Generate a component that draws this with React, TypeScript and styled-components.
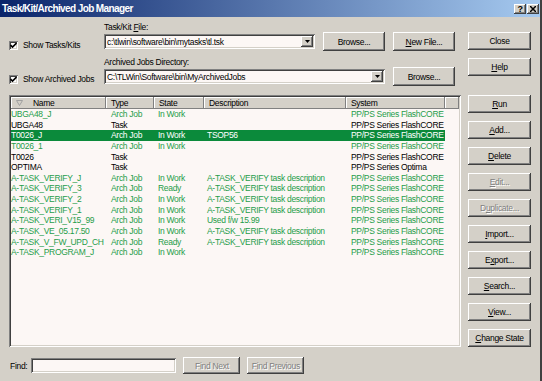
import React from "react";
import styled, { createGlobalStyle, css } from "styled-components";

const GlobalStyle = createGlobalStyle`
  html, body {
    margin: 0;
    padding: 0;
    background: #d4d0c8;
  }
  body {
    font-family: "Liberation Sans", Arial, sans-serif;
  }
`;

const raised = css`
  background: #d4d0c8;
  box-shadow: inset -1px -1px #404040, inset 1px 1px #ffffff,
    inset -2px -2px #808080, inset 2px 2px #d4d0c8;
`;

const sunken = css`
  box-shadow: inset 1px 1px #808080, inset -1px -1px #ffffff,
    inset 2px 2px #404040, inset -2px -2px #d4d0c8;
`;

const FIELD_BG = "#fcf7f5";
const GREEN = "#1f9d4a";
const SELECTED = "#0b8a3b";

const Window = styled.div`
  width: 542px;
  height: 381px;
  box-sizing: border-box;
  background: #d4d0c8;
  border-right: 2px solid #404040;
  font-size: 8.5px;
  letter-spacing: -0.3px;
  color: #000;
  display: flex;
  flex-direction: column;
  overflow: hidden;
`;

const TitleBar = styled.div`
  height: 17px;
  flex: none;
  display: flex;
  align-items: center;
  justify-content: space-between;
  padding: 0 1px 0 2px;
  background: linear-gradient(to right, #0a246a, #a6caf0);
`;

const TitleText = styled.span`
  color: #fff;
  font-weight: bold;
  font-size: 10px;
  letter-spacing: -0.6px;
`;

const TitleButtons = styled.div`
  display: flex;
  gap: 1px;
`;

const TitleButton = styled.div`
  ${raised};
  width: 12px;
  height: 10px;
  display: flex;
  align-items: center;
  justify-content: center;
  font-weight: bold;
  font-size: 9px;
  line-height: 10px;
`;

const Body = styled.div`
  flex: 1;
  display: flex;
  gap: 7px;
  padding: 1px 0 0 9px;
`;

const LeftCol = styled.div`
  width: 452px;
  display: flex;
  flex-direction: column;
`;

const TopGrid = styled.div`
  margin-top: 4px;
  display: grid;
  grid-template-columns: 87px 211px 62px 62px;
  grid-template-rows: 10px 19px 16px 19px;
  column-gap: 8px;
`;

const FieldLabel = styled.div<{ $row: number }>`
  grid-column: 2 / 4;
  grid-row: ${(p) => p.$row};
  align-self: end;
  line-height: 10px;
`;

const CheckRow = styled.label<{ $row: number; $drop: number }>`
  grid-column: 1;
  grid-row: ${(p) => p.$row};
  align-self: end;
  margin-bottom: ${(p) => p.$drop}px;
  display: flex;
  align-items: center;
  gap: 5px;
  white-space: nowrap;
`;

const CheckBox = styled.span`
  ${sunken};
  width: 9px;
  height: 9px;
  background: #fff;
  display: flex;
  align-items: center;
  justify-content: center;
  flex: none;
`;

const Combo = styled.div<{ $span: number; $row: number }>`
  ${sunken};
  grid-column: 2 / span ${(p) => p.$span};
  grid-row: ${(p) => p.$row};
  align-self: center;
  height: 15px;
  background: ${FIELD_BG};
  display: flex;
  align-items: center;
  justify-content: space-between;
  padding: 0 2px 0 3px;
  box-sizing: border-box;
`;

const ComboText = styled.span`
  white-space: nowrap;
`;

const ComboArrow = styled.div`
  ${raised};
  width: 12px;
  height: 11px;
  display: flex;
  align-items: center;
  justify-content: center;
`;

const Button = styled.div<{ $gap?: number; $disabled?: boolean }>`
  ${raised};
  height: 18px;
  margin-top: ${(p) => p.$gap ?? 0}px;
  display: flex;
  align-items: center;
  justify-content: center;
  white-space: nowrap;
  color: ${(p) => (p.$disabled ? "#808080" : "#000")};
  text-shadow: ${(p) => (p.$disabled ? "1px 1px #ffffff" : "none")};
  flex: none;
`;

const GridButton = styled(Button)<{ $col: number; $row: number }>`
  grid-column: ${(p) => p.$col};
  grid-row: ${(p) => p.$row};
  align-self: center;
  height: 19px;
`;

const List = styled.div`
  ${sunken};
  margin-top: 9px;
  height: 252px;
  box-sizing: border-box;
  padding: 2px;
  background: ${FIELD_BG};
  overflow: hidden;
`;

const Header = styled.div`
  display: flex;
  height: 12px;
`;

const HeaderCell = styled.div<{ $w: number; $grow?: boolean }>`
  width: ${(p) => p.$w}px;
  flex: ${(p) => (p.$grow ? 1 : "none")};
  box-sizing: border-box;
  background: #d4d0c8;
  box-shadow: inset -1px -1px #808080, inset 1px 1px #ffffff;
  padding-left: 5px;
  line-height: 12px;
  display: flex;
  align-items: center;
  gap: 10px;
  white-space: nowrap;
`;

const Row = styled.div<{ $tone: Tone }>`
  display: flex;
  height: 10.65px;
  line-height: 10.65px;
  width: ${95 + 48 + 50 + 142 + 99}px;
  background: ${(p) => (p.$tone === "selected" ? SELECTED : "transparent")};
  color: ${(p) =>
    p.$tone === "selected" ? "#ffffff" : p.$tone === "green" ? GREEN : "#000"};
`;

const Cell = styled.div<{ $w: number; $pad: number }>`
  width: ${(p) => p.$w}px;
  padding-left: ${(p) => p.$pad}px;
  box-sizing: border-box;
  white-space: nowrap;
  overflow: hidden;
`;

const FindRow = styled.div`
  margin-top: 10px;
  display: flex;
  align-items: center;
  padding-left: 1px;
`;

const FindInput = styled.div`
  ${sunken};
  width: 145px;
  height: 15px;
  margin-left: 4px;
  background: ${FIELD_BG};
`;

const FindButton = styled(Button)`
  width: 57px;
  height: 17px;
  margin-left: 7px;
`;

const RightCol = styled.div`
  width: 63px;
  display: flex;
  flex-direction: column;
`;

type Tone = "green" | "black" | "selected";

const columns = [
  { w: 95, pad: 0 },
  { w: 48, pad: 5 },
  { w: 50, pad: 4 },
  { w: 142, pad: 3 },
  { w: 99, pad: 5 },
];

const FC = "PP/PS Series FlashCORE";
const DESC = "A-TASK_VERIFY task description";

const jobs: { cells: string[]; tone: Tone }[] = [
  { cells: ["UBGA48_J", "Arch Job", "In Work", "", FC], tone: "green" },
  { cells: ["UBGA48", "Task", "", "", FC], tone: "black" },
  { cells: ["T0026_J", "Arch Job", "In Work", "TSOP56", FC], tone: "selected" },
  { cells: ["T0026_1", "Arch Job", "In Work", "", FC], tone: "green" },
  { cells: ["T0026", "Task", "", "", FC], tone: "black" },
  { cells: ["OPTIMA", "Task", "", "", "PP/PS Series Optima"], tone: "black" },
  { cells: ["A-TASK_VERIFY_J", "Arch Job", "In Work", DESC, FC], tone: "green" },
  { cells: ["A-TASK_VERIFY_3", "Arch Job", "Ready", DESC, FC], tone: "green" },
  { cells: ["A-TASK_VERIFY_2", "Arch Job", "In Work", DESC, FC], tone: "green" },
  { cells: ["A-TASK_VERIFY_1", "Arch Job", "In Work", DESC, FC], tone: "green" },
  { cells: ["A-TASK_VERI_V15_99", "Arch Job", "In Work", "Used f/w 15.99", FC], tone: "green" },
  { cells: ["A-TASK_VE_05.17.50", "Arch Job", "In Work", DESC, FC], tone: "green" },
  { cells: ["A-TASK_V_FW_UPD_CH", "Arch Job", "Ready", DESC, FC], tone: "green" },
  { cells: ["A-TASK_PROGRAM_J", "Arch Job", "In Work", "", FC], tone: "green" },
];

const Check = () => (
  <svg width="7" height="7" viewBox="0 0 7 7">
    <path d="M0.5 3 L2.5 5 L6.5 1" stroke="#000" strokeWidth="1.6" fill="none" />
  </svg>
);

const DownArrow = () => (
  <svg width="5" height="3" viewBox="0 0 5 3">
    <path d="M0 0 H5 L2.5 3 Z" fill="#000" />
  </svg>
);

const SortMark = () => (
  <svg width="7" height="6" viewBox="0 0 7 6">
    <path d="M0.5 0.5 H6.5 L3.5 5.5 Z" stroke="#a0a0a0" fill="none" strokeWidth="1" />
  </svg>
);

const CloseGlyph = () => (
  <svg width="6" height="6" viewBox="0 0 6 6">
    <path d="M0 0 L6 6 M6 0 L0 6" stroke="#000" strokeWidth="1.5" />
  </svg>
);

const App = () => {
  return (
    <>
      <GlobalStyle />
      <Window>
        <TitleBar>
          <TitleText>Task/Kit/Archived Job Manager</TitleText>
          <TitleButtons>
            <TitleButton>?</TitleButton>
            <TitleButton>
              <CloseGlyph />
            </TitleButton>
          </TitleButtons>
        </TitleBar>

        <Body>
          <LeftCol>
            <TopGrid>
              <FieldLabel $row={1}>
                Task/Kit <u>F</u>ile:
              </FieldLabel>
              <CheckRow $row={2} $drop={1}>
                <CheckBox>
                  <Check />
                </CheckBox>
                Show Tasks/Kits
              </CheckRow>
              <Combo $span={1} $row={2}>
                <ComboText>c:\tlwin\software\bin\mytasks\tl.tsk</ComboText>
                <ComboArrow>
                  <DownArrow />
                </ComboArrow>
              </Combo>
              <GridButton $col={3} $row={2}>
                Browse...
              </GridButton>
              <GridButton $col={4} $row={2}>
                <u>N</u>ew File...
              </GridButton>

              <FieldLabel $row={3}>Archived Jobs Directory:</FieldLabel>
              <CheckRow $row={4} $drop={2}>
                <CheckBox>
                  <Check />
                </CheckBox>
                Show Archived Jobs
              </CheckRow>
              <Combo $span={2} $row={4}>
                <ComboText>C:\TLWin\Software\bin\MyArchivedJobs</ComboText>
                <ComboArrow>
                  <DownArrow />
                </ComboArrow>
              </Combo>
              <GridButton $col={4} $row={4}>
                Browse...
              </GridButton>
            </TopGrid>

            <List>
              <Header>
                <HeaderCell $w={95}>
                  <SortMark />
                  Name
                </HeaderCell>
                <HeaderCell $w={48}>Type</HeaderCell>
                <HeaderCell $w={50}>State</HeaderCell>
                <HeaderCell $w={142}>Description</HeaderCell>
                <HeaderCell $w={99}>System</HeaderCell>
                <HeaderCell $w={0} $grow />
              </Header>
              {jobs.map((job) => (
                <Row key={job.cells[0]} $tone={job.tone}>
                  {job.cells.map((text, i) => (
                    <Cell key={i} $w={columns[i].w} $pad={columns[i].pad}>
                      {text}
                    </Cell>
                  ))}
                </Row>
              ))}
            </List>

            <FindRow>
              <span>Find:</span>
              <FindInput />
              <FindButton $disabled>Find Next</FindButton>
              <FindButton $disabled>Find Previous</FindButton>
            </FindRow>
          </LeftCol>

          <RightCol>
            <Button $gap={14}>Close</Button>
            <Button $gap={8}>
              <u>H</u>elp
            </Button>
            <Button $gap={19}>
              <u>R</u>un
            </Button>
            <Button $gap={8}>
              <u>A</u>dd...
            </Button>
            <Button $gap={8}>
              <u>D</u>elete
            </Button>
            <Button $gap={8} $disabled>
              <u>E</u>dit...
            </Button>
            <Button $gap={8} $disabled>
              D<u>u</u>plicate...
            </Button>
            <Button $gap={8}>
              <u>I</u>mport...
            </Button>
            <Button $gap={8}>
              E<u>x</u>port...
            </Button>
            <Button $gap={8}>
              <u>S</u>earch...
            </Button>
            <Button $gap={8}>
              <u>V</u>iew...
            </Button>
            <Button $gap={8}>
              <u>C</u>hange State
            </Button>
          </RightCol>
        </Body>
      </Window>
    </>
  );
};

export default App;
